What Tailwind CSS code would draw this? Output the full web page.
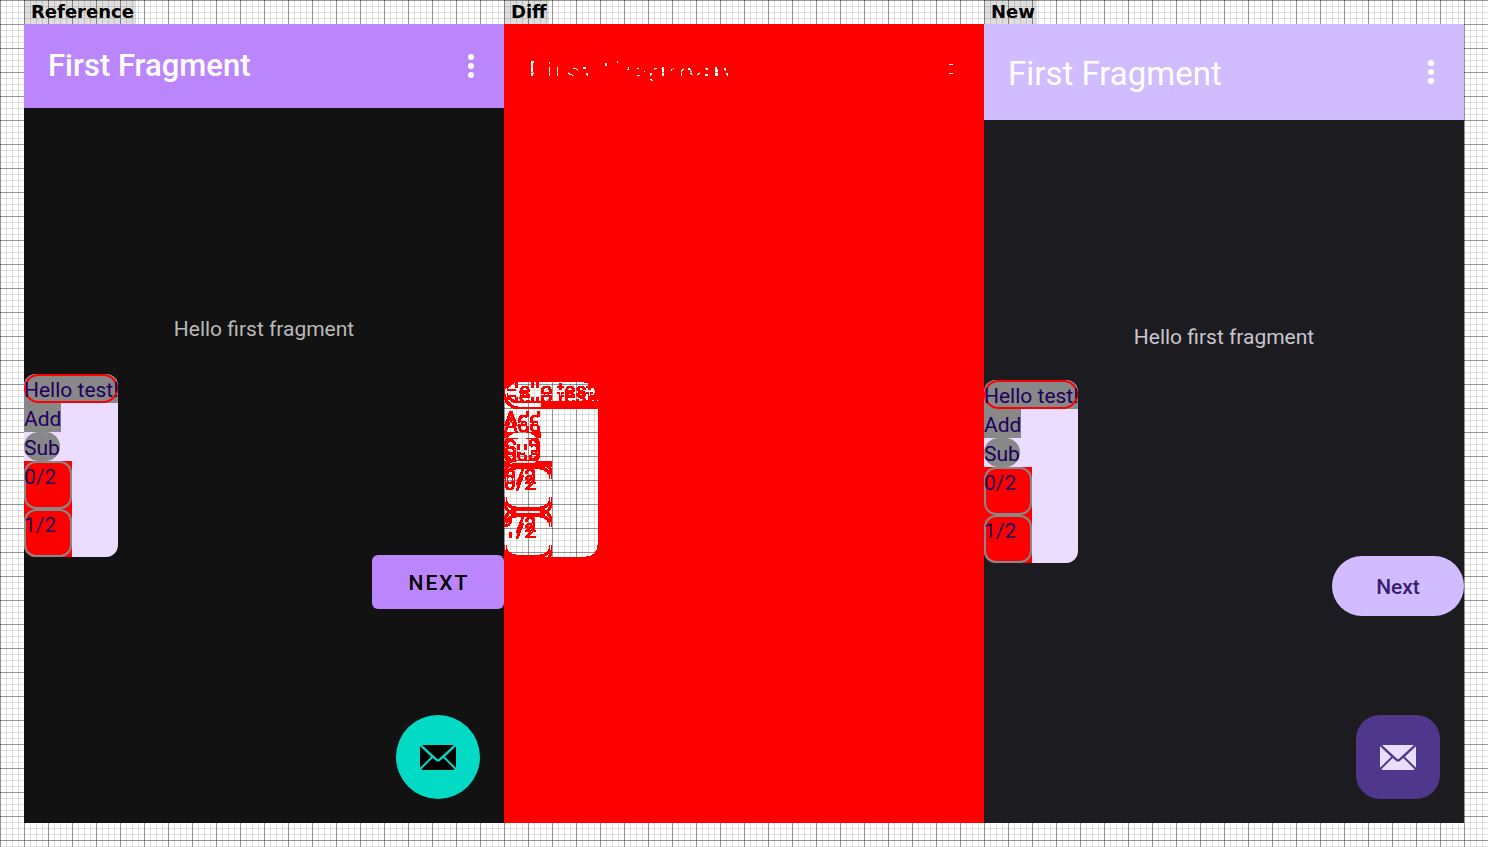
<!DOCTYPE html>
<html lang="en">
<head>
<meta charset="utf-8">
<meta name="viewport" content="width=device-width, initial-scale=1">
<title>Snapshot comparison</title>
<script src="https://cdn.jsdelivr.net/npm/@tailwindcss/browser@4"></script>
</head>
<body class="min-h-screen bg-white bg-[linear-gradient(to_right,#00000055_1px,transparent_1px),linear-gradient(to_bottom,#00000055_1px,transparent_1px),linear-gradient(to_right,#0000001e_1px,transparent_1px),linear-gradient(to_bottom,#0000001e_1px,transparent_1px)] bg-[size:24px_24px,24px_24px,6px_6px,6px_6px] font-[Roboto,sans-serif]">
<svg class="hidden">
  <symbol id="mail" viewBox="0 0 36 25">
    <path d="M2 0H34L19.2 13.6Q18 14.7 16.8 13.6Z"/>
    <path d="M0 1.2V22.8L11.2 11.8Z"/>
    <path d="M36 1.2V22.8L24.8 11.8Z"/>
    <path d="M12.7 13L1.4 24.2Q1.9 25 3 25H33Q34.1 25 34.6 24.2L23.3 13L19.8 16Q18 17.2 16.2 16Z"/>
  </symbol>
  <symbol id="dots" viewBox="0 0 6 24">
    <circle cx="3" cy="3" r="3"/><circle cx="3" cy="12" r="3"/><circle cx="3" cy="21" r="3"/>
  </symbol>
</svg>
<svg class="absolute size-0" aria-hidden="true">
  <filter id="changed" x="0" y="0" width="1" height="1" color-interpolation-filters="sRGB">
    <feColorMatrix type="matrix" values="0 0 0 0 1  0 0 0 0 0  0 0 0 0 0  90 90 90 0 -0.5"/>
  </filter>
</svg>
<main class="grid min-h-screen grid-cols-3 px-6 pb-6 text-[21px]">
  <section class="flex flex-col">
    <h2 class="h-6 self-start bg-black/13 pr-0.5 pl-[7px] font-['DejaVu_Sans',sans-serif] text-lg leading-6 font-bold text-black">Reference</h2>
    <div id="before" class="flex flex-1 flex-col bg-[#121212]">
      <header class="flex h-21 items-center justify-between bg-[#bb86fc] pr-[30px] pl-6 text-white">
        <h1 class="text-[31px] font-medium">First Fragment</h1>
        <button type="button" aria-label="More options"><svg class="h-6 w-1.5 fill-current"><use href="#dots"/></svg></button>
      </header>
      <div class="grid flex-1">
        <div class="flex flex-col items-center justify-evenly [grid-area:1/1]">
          <p class="pt-1 leading-6 text-[#b9b9b9]">Hello first fragment</p>
          <button type="button" class="my-[9px] h-[54px] w-33 self-end rounded-md bg-[#bb86fc] pt-1 pl-0.5 font-medium tracking-[2px] text-black">NEXT</button>
        </div>
        <div class="flex w-[94px] flex-col items-start self-center justify-self-start overflow-hidden rounded-xl bg-[#eaddff] leading-[25px] whitespace-nowrap text-[#21005d] [grid-area:1/1]">
          <p class="w-full bg-[#888]"><span class="block rounded-full pt-1 shadow-[inset_0_0_0_2px_red]">Hello test!</span></p>
          <p class="bg-[#888] pt-1">Add</p>
          <p class="rounded-full bg-[#888] pt-1">Sub</p>
          <p class="size-12 bg-[red]"><span class="block h-full rounded-xl pt-1 shadow-[inset_0_0_0_2px_#888]">0/2</span></p>
          <p class="size-12 bg-[red]"><span class="block h-full rounded-xl pt-1 shadow-[inset_0_0_0_2px_#888]">1/2</span></p>
        </div>
        <button type="button" aria-label="Send mail" class="m-6 grid size-21 place-items-center self-end justify-self-end rounded-full bg-[#03dac5] text-black [grid-area:1/1]"><svg class="h-[25px] w-9 fill-current"><use href="#mail"/></svg></button>
      </div>
    </div>
  </section>
  <section class="flex flex-col">
    <h2 class="h-6 self-start bg-black/13 pr-0.5 pl-[7px] font-['DejaVu_Sans',sans-serif] text-lg leading-6 font-bold text-black">Diff</h2>
    <div id="diff" class="grid flex-1 [filter:url(#changed)]" inert></div>
  </section>
  <section class="flex flex-col">
    <h2 class="h-6 self-start bg-black/13 pr-0.5 pl-[7px] font-['DejaVu_Sans',sans-serif] text-lg leading-6 font-bold text-black">New</h2>
    <div id="after" class="flex flex-1 flex-col bg-[#1c1b1f]">
      <header class="flex h-24 items-center justify-between bg-[#d0bcff] pr-[30px] pl-6 text-white">
        <h1 class="pt-1 text-[33px]">First Fragment</h1>
        <button type="button" aria-label="More options"><svg class="h-6 w-1.5 fill-current"><use href="#dots"/></svg></button>
      </header>
      <div class="grid flex-1">
        <div class="flex flex-col items-center justify-evenly [grid-area:1/1]">
          <p class="pt-1 leading-6 text-[#cac4d0]">Hello first fragment</p>
          <button type="button" class="my-1.5 h-15 w-33 self-end rounded-full bg-[#d0bcff] pt-1 font-medium text-[#381e72]">Next</button>
        </div>
        <div class="flex w-[94px] flex-col items-start self-center justify-self-start overflow-hidden rounded-xl bg-[#eaddff] leading-[25px] whitespace-nowrap text-[#21005d] [grid-area:1/1]">
          <p class="w-full bg-[#888]"><span class="block rounded-full pt-1 shadow-[inset_0_0_0_2px_red]">Hello test!</span></p>
          <p class="bg-[#888] pt-1">Add</p>
          <p class="rounded-full bg-[#888] pt-1">Sub</p>
          <p class="size-12 bg-[red]"><span class="block h-full rounded-xl pt-1 shadow-[inset_0_0_0_2px_#888]">0/2</span></p>
          <p class="size-12 bg-[red]"><span class="block h-full rounded-xl pt-1 shadow-[inset_0_0_0_2px_#888]">1/2</span></p>
        </div>
        <button type="button" aria-label="Send mail" class="m-6 grid size-21 place-items-center self-end justify-self-end rounded-3xl bg-[#4f378b] text-[#eaddff] [grid-area:1/1]"><svg class="h-[25px] w-9 fill-current"><use href="#mail"/></svg></button>
      </div>
    </div>
  </section>
</main>
<script>
  // Blend a copy of both screens; every pixel that differs turns red, equal pixels turn transparent.
  const diff = document.getElementById('diff');
  for (const id of ['before', 'after']) {
    const copy = document.getElementById(id).cloneNode(true);
    copy.removeAttribute('id');
    copy.classList.add('[grid-area:1/1]');
    if (id === 'after') copy.classList.add('mix-blend-difference');
    diff.append(copy);
  }
</script>
</body>
</html>
